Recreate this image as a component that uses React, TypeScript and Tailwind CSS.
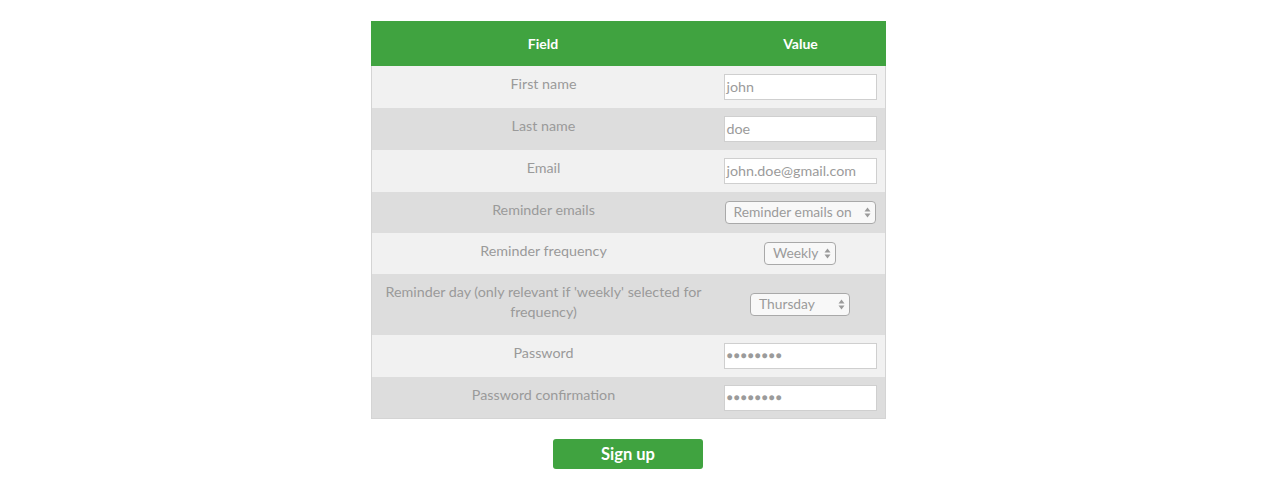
import React from 'react';

const font = { fontFamily: 'Lato, "Open Sans", sans-serif' };

function Arrows() {
  return (
    <svg width="7" height="11" viewBox="0 0 7 11" className="shrink-0">
      <path d="M3.5 0.5 L6.5 4.5 L0.5 4.5 Z" fill="#9a9a9a" />
      <path d="M3.5 10.5 L6.5 6.5 L0.5 6.5 Z" fill="#9a9a9a" />
    </svg>
  );
}

function TextInput({ value, dots }: { value: string; dots?: boolean }) {
  return (
    <div className="w-[153px] h-[26px] bg-white border border-[#cfcfcf] flex items-center pl-[2px] pb-[1px] text-[14.3px] text-[#9b9b9b]">
      {dots ? (
        <span className="tracking-[1px] text-[#9b9b9b] text-[10px]">●●●●●●●●</span>
      ) : (
        value
      )}
    </div>
  );
}

function Select({ value, width }: { value: string; width: string }) {
  return (
    <div
      className={`${width} h-[23px] bg-[#f8f8f8] border border-[#a9a9a9] rounded-[4px] flex items-center justify-between pl-[8px] pr-[4px] text-[13.8px] text-[#9b9b9b]`}
    >
      <span>{value}</span>
      <Arrows />
    </div>
  );
}

interface Row {
  label: React.ReactNode;
  control: React.ReactNode;
  height: string;
  bg: string;
}

const rows: Row[] = [
  { label: 'First name', control: <TextInput value="john" />, height: 'h-[42px]', bg: 'bg-[#f1f1f1]' },
  { label: 'Last name', control: <TextInput value="doe" />, height: 'h-[42px]', bg: 'bg-[#dddddd]' },
  { label: 'Email', control: <TextInput value="john.doe@gmail.com" />, height: 'h-[42px]', bg: 'bg-[#f1f1f1]' },
  {
    label: 'Reminder emails',
    control: <Select value="Reminder emails on" width="w-[151px]" />,
    height: 'h-[41px]',
    bg: 'bg-[#dddddd]',
  },
  {
    label: 'Reminder frequency',
    control: <Select value="Weekly" width="w-[72px]" />,
    height: 'h-[41px]',
    bg: 'bg-[#f1f1f1]',
  },
  {
    label: (
      <>
        Reminder day (only relevant if 'weekly' selected for
        <br />
        frequency)
      </>
    ),
    control: <Select value="Thursday" width="w-[100px]" />,
    height: 'h-[61px]',
    bg: 'bg-[#dddddd]',
  },
  { label: 'Password', control: <TextInput value="" dots />, height: 'h-[42px]', bg: 'bg-[#f1f1f1]' },
  { label: 'Password confirmation', control: <TextInput value="" dots />, height: 'h-[41px]', bg: 'bg-[#dddddd]' },
];

export default function App() {
  return (
    <div className="w-full min-h-[483px] bg-white flex flex-col items-center pt-[21px] pr-[14px]" style={font}>
      <div className="w-[515px] border-x border-b border-[#d4d4d4]">
        <div className="h-[45px] bg-[#40a340] flex text-white font-bold text-[14px] -mx-px">
          <div className="w-[345px] flex items-center justify-center">Field</div>
          <div className="flex-1 flex items-center justify-center">Value</div>
        </div>
        {rows.map((r, i) => (
          <div key={i} className={`flex ${r.height} ${r.bg}`}>
            <div className="w-[344px] flex items-center justify-center text-center text-[14.3px] leading-[20px] text-[#9a9a9a] pb-[6px]">
              <div>{r.label}</div>
            </div>
            <div className="flex-1 flex items-center justify-center">{r.control}</div>
          </div>
        ))}
      </div>
      <button className="mt-[20px] w-[150px] h-[30px] bg-[#40a340] rounded-[3px] text-white font-bold text-[16.5px]">
        Sign up
      </button>
    </div>
  );
}
